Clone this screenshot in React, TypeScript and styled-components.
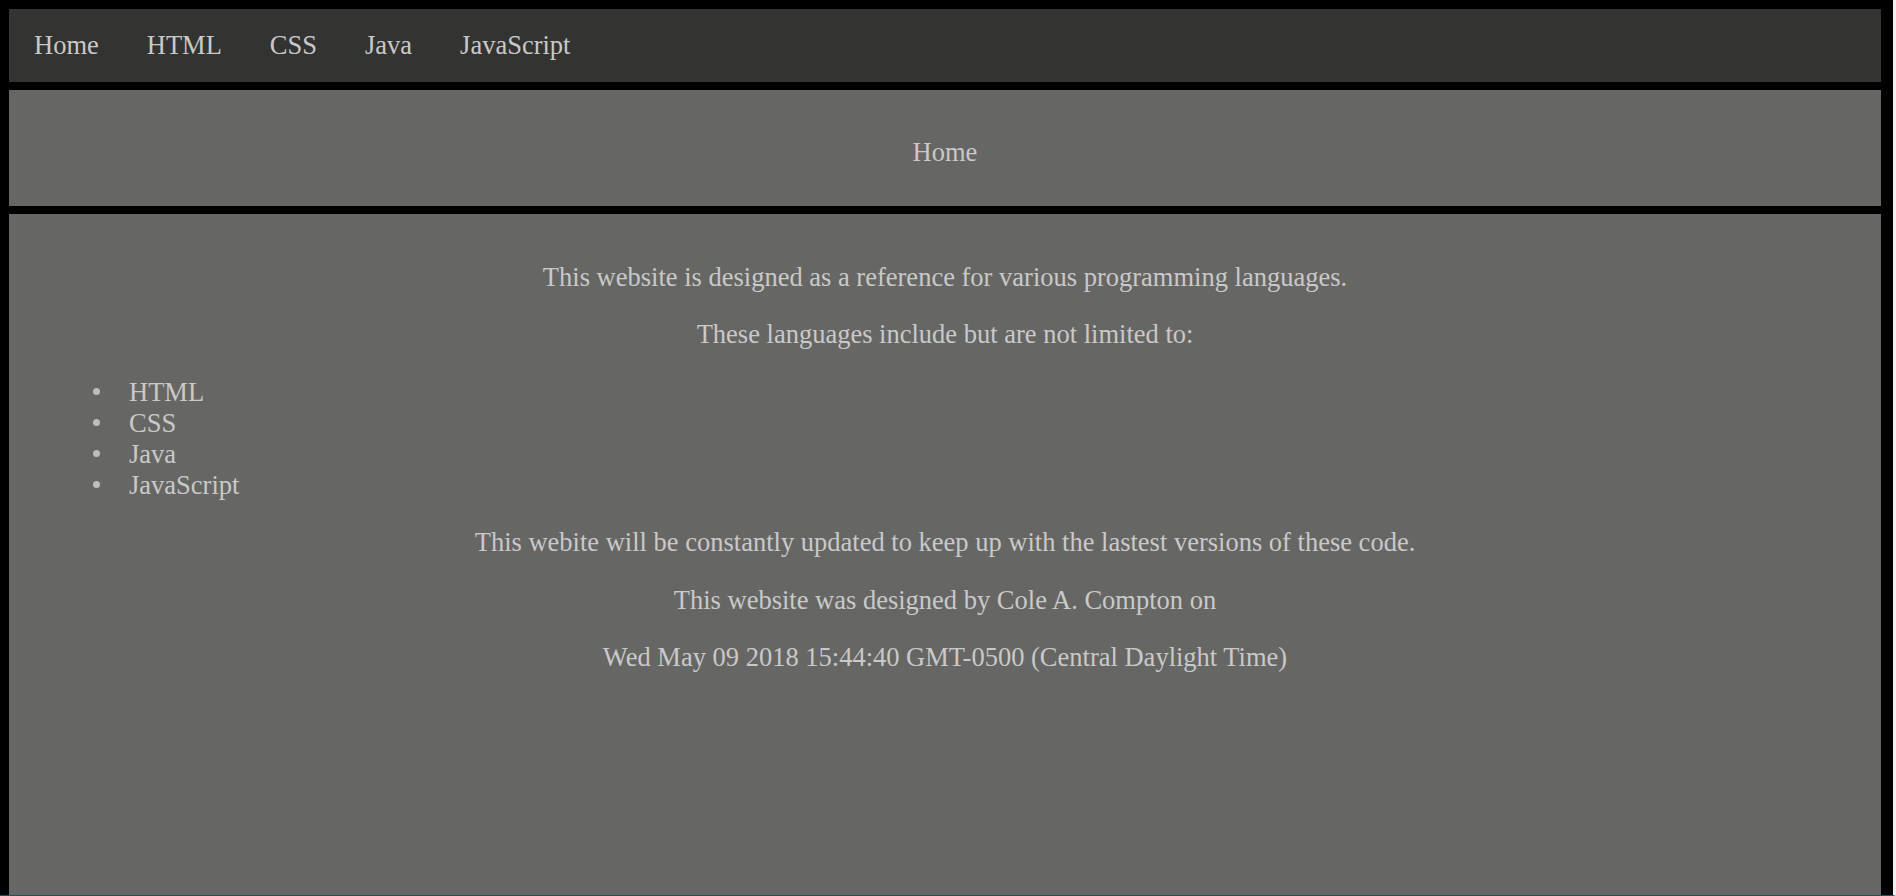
import styled, { createGlobalStyle } from "styled-components"

const GlobalStyle = createGlobalStyle`
    html, body {
        background: #000000;
    }
    body {
        margin: 0;
        font-family: "Liberation Serif", "Times New Roman", serif;
        font-size: 26.5px;
        color: #c9c9c9;
    }
`

const StyledPage = styled.div`
    box-sizing: border-box;
    min-height: 896px;
    display: flex;
    flex-direction: column;
    gap: 8px;
    padding: 9px 12px 0 9px;
    border-right: 3px solid #f0f0f0;
    border-bottom: 1px solid #1d4f7a;
`

const NavBar = styled.nav`
    background: #333332;
    height: 73px;
    display: flex;
    align-items: center;
    ul {
        display: flex;
        gap: 48px;
        margin: 0;
        padding: 0 0 0 25px;
        list-style: none;
    }
    a {
        color: #c9c9c9;
        text-decoration: none;
    }
`

const Banner = styled.header`
    background: #666664;
    padding: 20px 16px 12px;
    text-align: center;
    p {
        margin: 26.5px 0;
    }
`

const Main = styled.main`
    flex: 1;
    background: #666664;
    padding: 21px 80px;
    text-align: center;
    p {
        margin: 26.5px 0;
    }
    ul {
        text-align: left;
        margin: 26.5px 0;
        padding-left: 40px;
        list-style: none;
    }
    li::before {
        content: "";
        display: inline-block;
        width: 7px;
        height: 7px;
        border-radius: 50%;
        background: #bdbdbd;
        margin-left: -36px;
        margin-right: 29px;
        vertical-align: 0.22em;
    }
`

const links = ["Home", "HTML", "CSS", "Java", "JavaScript"]

export default function App() {
    return (
        <>
            <GlobalStyle />
            <StyledPage>
                <NavBar>
                    <ul>
                        {links.map((l) => (
                            <li key={l}><a href="#">{l}</a></li>
                        ))}
                    </ul>
                </NavBar>
                <Banner>
                    <p>Home</p>
                </Banner>
                <Main>
                    <p>This website is designed as a reference for various programming languages.</p>
                    <p>These languages include but are not limited to:</p>
                    <ul>
                        <li>HTML</li>
                        <li>CSS</li>
                        <li>Java</li>
                        <li>JavaScript</li>
                    </ul>
                    <p>This webite will be constantly updated to keep up with the lastest versions of these code.</p>
                    <p>This website was designed by Cole A. Compton on</p>
                    <p>Wed May 09 2018 15:44:40 GMT-0500 (Central Daylight Time)</p>
                </Main>
            </StyledPage>
        </>
    )
}
